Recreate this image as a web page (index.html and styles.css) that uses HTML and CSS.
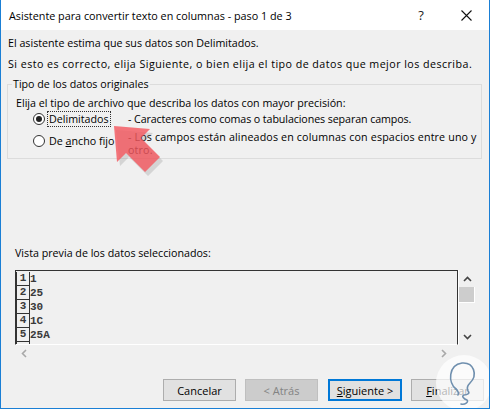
FILE: index.html
```html
<!DOCTYPE html>
<html lang="es">
<head>
<meta charset="utf-8">
<title>Asistente para convertir texto en columnas</title>
<link rel="stylesheet" href="styles.css">
</head>
<body>
<div class="window">
  <div class="titlebar">
    <div class="title">Asistente para convertir texto en columnas - paso 1 de 3</div>
    <div class="tb-btn help">?</div>
    <div class="tb-btn close">
      <svg width="11" height="11" viewBox="0 0 11 11"><path d="M0.5 0.5 L10.5 10.5 M10.5 0.5 L0.5 10.5" stroke="#111" stroke-width="1.1" fill="none"/></svg>
    </div>
  </div>
  <div class="content">
    <p class="line">El asistente estima que sus datos son Delimitados.</p>
    <p class="line wide">Si esto es correcto, elija Siguiente, o bien elija el tipo de datos que mejor los describa.</p>

    <div class="group">
      <div class="legend">Tipo de los datos originales</div>
      <div class="choose">Elija el tipo de archivo que describa los datos con mayor precisión:</div>
      <div class="opt-row first">
        <div class="opt">
          <span class="radio checked"></span>
          <span class="opt-label focus">Delimitados</span>
        </div>
        <div class="desc one">- Caracteres como comas o tabulaciones separan campos.</div>
      </div>
      <div class="opt-row second">
        <div class="opt">
          <span class="radio"></span>
          <span class="opt-label">De <u>a</u>ncho fijo</span>
        </div>
        <div class="desc two">- Los campos están alineados en columnas con espacios entre uno y otro.</div>
      </div>
    </div>

    <div class="preview-label">Vista previa de los datos seleccionados:</div>
    <div class="preview">
      <div class="preview-box">
        <div class="prow"><span class="num">1</span><span class="val">1</span></div>
        <div class="prow"><span class="num">2</span><span class="val">25</span></div>
        <div class="prow"><span class="num">3</span><span class="val">30</span></div>
        <div class="prow"><span class="num">4</span><span class="val">1C</span></div>
        <div class="prow"><span class="num">5</span><span class="val">25A</span></div>
        <div class="prow"><span class="num"></span><span class="val"></span></div>
      </div>
      <div class="vscroll">
        <div class="sarrow">
          <svg width="9" height="6" viewBox="0 0 9 6"><path d="M1 5 L4.5 1.5 L8 5" stroke="#444" stroke-width="1.6" fill="none"/></svg>
        </div>
        <div class="thumb"></div>
        <div class="strack"></div>
        <div class="sarrow">
          <svg width="9" height="6" viewBox="0 0 9 6"><path d="M1 1 L4.5 4.5 L8 1" stroke="#444" stroke-width="1.6" fill="none"/></svg>
        </div>
      </div>
    </div>
    <div class="hscroll">
      <svg width="6" height="9" viewBox="0 0 6 9"><path d="M5 1 L1.5 4.5 L5 8" stroke="#a8a8a8" stroke-width="1.6" fill="none"/></svg>
      <svg width="6" height="9" viewBox="0 0 6 9"><path d="M1 1 L4.5 4.5 L1 8" stroke="#a8a8a8" stroke-width="1.6" fill="none"/></svg>
    </div>

    <div class="buttons">
      <div class="btn">Cancelar</div>
      <div class="btn disabled">&lt; Atrás</div>
      <div class="btn default"><u>S</u>iguiente &gt;</div>
      <div class="btn"><u>F</u>inalizar</div>
    </div>
  </div>

  <svg class="arrow" width="70" height="70" viewBox="105 117 70 70">
    <polygon points="116,130 120,166 129,157 148,176 163,161 144,142 153,133" fill="#666" opacity="0.2"/>
    <polygon points="114,126 117,162 126,153 145,172 160,157 141,138 150,129" fill="#f4555c" opacity="0.8"/>
  </svg>

  <svg class="watermark" width="60" height="60" viewBox="0 0 60 60">
    <circle cx="30" cy="30" r="28" fill="#ffffff" opacity="0.7"/>
    <path d="M22 36 C14 30 14 12 28 10 C40 9 44 22 36 30 C33 33 33 36 34 38 C36 40 34 42 30 42 C27 43 30 46 33 47 C35 49 31 52 27 51" stroke="#6f8fae" stroke-width="1.6" fill="none" stroke-linecap="round"/>
    <path d="M22 36 C24 38 25 40 24 42" stroke="#6f8fae" stroke-width="1.6" fill="none" stroke-linecap="round"/>
  </svg>
</div>
</body>
</html>
```

FILE: styles.css
```css
* { box-sizing: border-box; }
html, body { margin: 0; padding: 0; background: #f0f0f0; }
body {
  font-family: "Open Sans", "Noto Sans", sans-serif;
  font-size: 10.7px;
  color: #000;
}
.window {
  position: relative;
  width: 490px;
  height: 409px;
  background: #f0f0f0;
  border: 1px solid #1a7fd5;
  border-top: none;
  overflow: hidden;
}
.titlebar {
  height: 30px;
  background: #fff;
  display: flex;
  align-items: center;
  padding-left: 8px;
}
.title {
  flex: 1;
  font-size: 10.8px;
  color: #000;
}
.tb-btn {
  width: 46px;
  height: 30px;
  display: flex;
  align-items: center;
  justify-content: center;
}
.help { font-size: 13px; color: #222; }
.close { width: 45px; }

.content {
  padding: 3px 5px 0 7px;
}
.line {
  margin: 0;
  line-height: 21px;
  white-space: nowrap;
}
.line.wide { letter-spacing: 0.45px; }

.group {
  margin-top: 9px;
  margin-left: -1px;
  width: 475px;
  border: 1px solid #dcdcdc;
  padding-bottom: 1px;
}
.legend {
  width: fit-content;
  margin: -9px 0 0 4px;
  padding: 0 1px;
  line-height: 16px;
  background: #f0f0f0;
}
.choose {
  margin-top: 3px;
  padding-left: 8px;
  line-height: 16px;
}
.opt-row {
  display: grid;
  grid-template-columns: 95px 1fr;
  padding-left: 25px;
}
.opt-row.second { margin-top: 3px; }
.opt {
  display: flex;
  align-items: center;
  height: 16px;
}
.opt-row.second .opt { margin-top: 3px; }
.radio {
  width: 12px;
  height: 12px;
  border: 1px solid #333;
  border-radius: 50%;
  background: #fff;
  display: flex;
  align-items: center;
  justify-content: center;
  flex: none;
}
.radio.checked::after {
  content: "";
  width: 6px;
  height: 6px;
  border-radius: 50%;
  background: #222;
}
.opt-label {
  margin-left: 2px;
  padding: 0 1px;
  line-height: 14px;
  border: 1px solid transparent;
}
.opt-label.focus { border: 1px dotted #333; }
.desc {
  line-height: 16px;
  white-space: nowrap;
}
.desc.one { letter-spacing: -0.1px; }
.desc.two {
  white-space: normal;
  line-height: 13px;
  padding-top: 1px;
  width: 350px;
  letter-spacing: 0.15px;
}

.preview-label {
  margin-top: 86px;
  padding-left: 7px;
  line-height: 16px;
}
.preview {
  margin-top: 9px;
  display: flex;
  height: 75px;
}
.preview-box {
  margin-left: 7px;
  width: 443px;
  height: 75px;
  border: 1px solid #333;
  border-bottom: 1px solid #fff;
  box-shadow: 1px 0 0 #fff;
  padding-top: 1px;
  overflow: hidden;
  font-family: "Liberation Mono", monospace;
  font-size: 11px;
  font-weight: bold;
  color: #3a3a3a;
}
.prow {
  display: flex;
  height: 14px;
}
.num {
  width: 14px;
  height: 14px;
  border: 1px solid #333;
  border-top: none;
  line-height: 13px;
  text-align: center;
  flex: none;
}
.val {
  line-height: 14px;
}
.vscroll {
  margin-left: 1px;
  width: 16px;
  display: flex;
  flex-direction: column;
}
.sarrow {
  height: 17px;
  display: flex;
  align-items: center;
  justify-content: center;
}
.thumb {
  height: 16px;
  background: #cdcdcd;
  border-right: 1px solid #fff;
  border-bottom: 1px solid #fff;
}
.strack { flex: 1; }
.hscroll {
  height: 17px;
  display: flex;
  align-items: center;
  justify-content: space-between;
  padding: 0 37px 0 13px;
}

.buttons {
  margin-top: 17px;
  display: flex;
  justify-content: flex-end;
  gap: 9px;
}
.btn {
  width: 73px;
  height: 22px;
  background: #e1e1e1;
  border: 1px solid #adadad;
  display: flex;
  align-items: center;
  justify-content: center;
  font-size: 11px;
}
.btn.disabled {
  background: #cccccc;
  border-color: #bfbfbf;
  color: #838383;
}
.btn.default {
  border: 2px solid #0078d7;
  width: 74px;
  margin-left: 1px;
}

.arrow {
  position: absolute;
  left: 104px;
  top: 117px;
}
.watermark {
  position: absolute;
  left: 433px;
  top: 353px;
}
```
